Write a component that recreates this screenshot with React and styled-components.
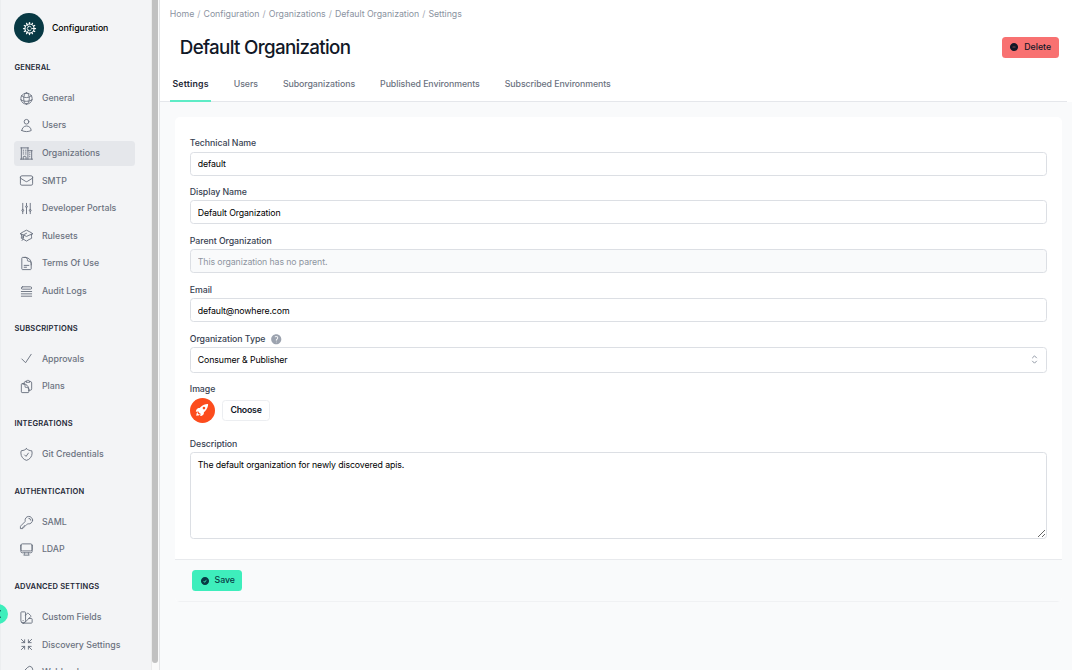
import React from "react";
import styled, { createGlobalStyle, css } from "styled-components";
import {
  HiOutlineGlobeAlt,
  HiOutlineUser,
  HiOutlineBuildingOffice2,
  HiOutlineEnvelope,
  HiOutlineAdjustmentsVertical,
  HiOutlineAcademicCap,
  HiOutlineDocumentText,
  HiOutlineQueueList,
  HiOutlineCheck,
  HiOutlineClipboardDocument,
  HiOutlineShieldCheck,
  HiOutlineKey,
  HiOutlineComputerDesktop,
  HiOutlineSwatch,
  HiOutlineArrowsPointingIn,
  HiOutlineLink,
  HiMinusCircle,
  HiCheckCircle,
  HiQuestionMarkCircle,
  HiOutlineChevronUpDown,
} from "react-icons/hi2";
import { IoRocketSharp } from "react-icons/io5";

const GlobalStyle = createGlobalStyle`
  *, *::before, *::after { box-sizing: border-box; }
  body {
    margin: 0;
    overflow: hidden;
    background: #f9fafb;
    font-family: Inter, "Liberation Sans", sans-serif;
    font-size: 8.78px;
    line-height: 12.5px;
    color: #111827;
  }
  button, input, textarea { font: inherit; color: inherit; letter-spacing: inherit; }
`;

const Shell = styled.div`
  display: flex;
  width: 1072px;
  height: 670px;
  overflow: hidden;
  position: relative;
`;

const Sidebar = styled.aside`
  display: flex;
  flex: none;
  width: 160px;
  height: 670px;
  background: #f3f4f6;
  border-right: 1px solid #e3e4e6;
`;

const SidebarContent = styled.div`
  flex: 1;
  overflow: hidden;
  padding: 13px 0 0 14.4px;
  border-left: 1px solid #eceef0;
`;

const ScrollTrack = styled.div`
  flex: none;
  width: 8px;
  background: #fafafa;
  border-left: 1px solid #ebebeb;
`;

const ScrollThumb = styled.div`
  width: 5.5px;
  height: 663px;
  background: #c1c1c1;
  border-radius: 0 0 3px 3px;
`;

const Brand = styled.div`
  display: flex;
  align-items: center;
  gap: 7.6px;
  margin-left: -1px;
  height: 30px;
  font-weight: 500;
  letter-spacing: -0.08px;
  color: #000;
`;

const BrandMark = styled.span`
  display: flex;
  align-items: center;
  justify-content: center;
  width: 30px;
  height: 30px;
  border-radius: 50%;
  background: #083944;
  color: #fff;
  svg { width: 15px; height: 15px; }
`;

const NavGroup = styled.section`
  margin: ${(p) => (p.$first ? "19.1px" : "19.3px")} 0 0 -1px;
`;

const NavHeading = styled.h2`
  margin: 0 0 11px;
  font-size: 7.53px;
  line-height: 12.5px;
  font-weight: 600;
  letter-spacing: 0.19px;
  color: #1f2937;
  text-transform: uppercase;
`;

const NavItem = styled.div`
  display: flex;
  align-items: center;
  gap: 7.4px;
  width: 120.4px;
  height: 25.1px;
  margin-bottom: 2.48px;
  padding-left: 5.1px;
  border-radius: 3.5px;
  font-weight: 500;
  color: #6b7280;
  background: ${(p) => (p.$active ? "#e5e7eb" : "transparent")};
  &:last-child { margin-bottom: -0.1px; }
  svg { width: 15px; height: 15px; flex: none; }
`;

const EdgeButton = styled.div`
  position: absolute;
  left: -12.5px;
  top: 603.5px;
  width: 20px;
  height: 20px;
  border-radius: 50%;
  background: #3eeebc;
  display: flex;
  align-items: center;
  justify-content: flex-end;
  svg { width: 8px; height: 8px; margin-right: 6.5px; }
`;

const Main = styled.main`
  flex: 1;
  min-width: 0;
  display: flex;
  flex-direction: column;
`;

const Header = styled.header`
  height: 102px;
  background: #fff;
  display: flex;
  flex-direction: column;
`;

const Breadcrumbs = styled.nav`
  display: flex;
  gap: 3.1px;
  padding: 8px 0 0 9.8px;
  letter-spacing: -0.035px;
  color: #8b93a1;
  span { color: #a3a9b4; }
`;

const TitleRow = styled.div`
  display: flex;
  align-items: center;
  justify-content: space-between;
  height: 26px;
  margin: 13.5px 13.3px 0 19.8px;
`;

const Title = styled.h1`
  margin: 1px 0 0;
  font-size: 18.8px;
  line-height: 26px;
  font-weight: 500;
  letter-spacing: -0.69px;
  color: #111827;
`;

const Button = styled.button`
  display: flex;
  align-items: center;
  padding: 0 7.6px;
  gap: 5px;
  height: 21px;
  border: 0;
  border-radius: 3.5px;
  font-weight: 500;
  white-space: nowrap;
  svg { width: 10px; height: 10px; }
  ${(p) =>
    p.$tone === "danger" &&
    css`background: #f87171; color: #111827;`}
  ${(p) =>
    p.$tone === "primary" &&
    css`background: #3eeebc; color: #083944; letter-spacing: -0.1px; padding: 0 7.2px;`}
  ${(p) =>
    p.$tone === "plain" &&
    css`background: #fff; color: #111827; border: 1px solid #eceef1; font-weight: 600; letter-spacing: -0.23px; padding: 0 7.2px;`}
`;

const Tabs = styled.div`
  display: flex;
  align-items: stretch;
  gap: 20px;
  flex: 1;
  margin: 7.4px 5px 0 0;
  padding-left: 9.9px;
  border-bottom: 1px solid #e5e7eb;
`;

const Tab = styled.div`
  padding: 10.9px 2.5px 0;
  margin-bottom: -1px;
  letter-spacing: ${(p) => (p.$active ? "0.2px" : "-0.06px")};
  font-weight: ${(p) => (p.$active ? 600 : 500)};
  color: ${(p) => (p.$active ? "#1f2937" : "#6b7280")};
  border-bottom: ${(p) => (p.$active ? "2px solid #5eecc6" : "0")};
`;

const Card = styled.section`
  margin: 15px 10.5px 0 15px;
  border-radius: 5px;
  background: #fff;
  overflow: hidden;
  letter-spacing: -0.11px;
`;

const Form = styled.div`
  padding: 20.2px 14.9px 0 14.8px;
  height: 442px;
`;

const Field = styled.div`
  display: flex;
  flex-direction: column;
  margin-bottom: ${(p) => p.$gap || "10.5px"};
`;

const Label = styled.label`
  display: flex;
  align-items: center;
  gap: 5px;
  height: 12.5px;
  margin-bottom: 1.9px;
  font-weight: 500;
  letter-spacing: -0.06px;
  color: #374151;
  svg { width: 12.5px; height: 12.5px; color: #9ca3af; }
`;

const Input = styled.input`
  height: 24px;
  width: 100%;
  padding: 0 7px;
  border: 1px solid #dcdfe4;
  border-radius: 3.5px;
  background: #fff;
  color: #000;
  outline: 0;
  &::placeholder { color: #8e95a1; opacity: 1; }
  &:disabled { background: #f9fafb; }
`;

const Select = styled.div`
  display: flex;
  align-items: center;
  justify-content: space-between;
  height: 25.5px;
  padding: 0 5px 0 7px;
  border: 1px solid #dcdfe4;
  border-radius: 3.5px;
  color: #000;
  svg { width: 13px; height: 13px; color: #8f96a3; stroke-width: 1.8; }
`;

const ImageRow = styled.div`
  display: flex;
  align-items: center;
  gap: 7.5px;
  height: 25px;
`;

const Avatar = styled.span`
  display: flex;
  align-items: center;
  justify-content: center;
  width: 25px;
  height: 25px;
  border-radius: 50%;
  background: #fc4c1d;
  color: #fff;
  svg { width: 14px; height: 14px; }
`;

const TextArea = styled.textarea`
  display: block;
  width: 100%;
  height: 87px;
  padding: 5.4px 7px;
  border: 1px solid #dcdfe4;
  border-radius: 3.5px;
  color: #000;
  outline: 0;
`;

const Footer = styled.footer`
  display: flex;
  align-items: center;
  height: 43px;
  padding-left: 17.4px;
  background: #f9fafb;
  border-top: 1px solid #e8eaed;
  border-bottom: 1px solid #f0f1f3;
`;

const TEETH = Array.from({ length: 12 }, (_, i) => i * 30);

function GearIcon() {
  return (
    <svg viewBox="0 0 24 24" fill="none" stroke="currentColor" strokeLinecap="round">
      <circle cx="12" cy="12" r="7.3" strokeWidth="1.8" />
      {TEETH.map((angle) => (
        <path key={angle} d="M12 4.2V2.4" strokeWidth="2" transform={`rotate(${angle} 12 12)`} />
      ))}
      <path d="M14.6 9.6a3.5 3.5 0 1 0 0 4.8M15.4 12H19M10.2 9l-1.8-3.1M10.2 15l-1.8 3.1" strokeWidth="1.4" />
    </svg>
  );
}

const GROUPS = [
  {
    title: "General",
    items: [
      ["General", HiOutlineGlobeAlt],
      ["Users", HiOutlineUser],
      ["Organizations", HiOutlineBuildingOffice2],
      ["SMTP", HiOutlineEnvelope],
      ["Developer Portals", HiOutlineAdjustmentsVertical],
      ["Rulesets", HiOutlineAcademicCap],
      ["Terms Of Use", HiOutlineDocumentText],
      ["Audit Logs", HiOutlineQueueList],
    ],
  },
  {
    title: "Subscriptions",
    items: [
      ["Approvals", HiOutlineCheck],
      ["Plans", HiOutlineClipboardDocument],
    ],
  },
  { title: "Integrations", items: [["Git Credentials", HiOutlineShieldCheck]] },
  {
    title: "Authentication",
    items: [
      ["SAML", HiOutlineKey],
      ["LDAP", HiOutlineComputerDesktop],
    ],
  },
  {
    title: "Advanced Settings",
    items: [
      ["Custom Fields", HiOutlineSwatch],
      ["Discovery Settings", HiOutlineArrowsPointingIn],
      ["Webhooks", HiOutlineLink],
    ],
  },
];

const CRUMBS = ["Home", "Configuration", "Organizations", "Default Organization", "Settings"];
const TABS = ["Settings", "Users", "Suborganizations", "Published Environments", "Subscribed Environments"];

export default function App() {
  return (
    <Shell>
      <GlobalStyle />
      <Sidebar>
        <SidebarContent>
          <Brand>
            <BrandMark><GearIcon /></BrandMark>
            Configuration
          </Brand>
          {GROUPS.map((group, i) => (
            <NavGroup key={group.title} $first={i === 0}>
              <NavHeading>{group.title}</NavHeading>
              {group.items.map(([name, Icon]) => (
                <NavItem key={name} $active={name === "Organizations"}>
                  <Icon />
                  {name}
                </NavItem>
              ))}
            </NavGroup>
          ))}
        </SidebarContent>
        <ScrollTrack><ScrollThumb /></ScrollTrack>
      </Sidebar>
      <Main>
        <Header>
          <Breadcrumbs>
            {CRUMBS.map((crumb, i) => (
              <React.Fragment key={crumb}>
                {i > 0 && <span>/</span>}
                <div>{crumb}</div>
              </React.Fragment>
            ))}
          </Breadcrumbs>
          <TitleRow>
            <Title>Default Organization</Title>
            <Button $tone="danger"><HiMinusCircle />Delete</Button>
          </TitleRow>
          <Tabs>
            {TABS.map((tab, i) => (
              <Tab key={tab} $active={i === 0}>{tab}</Tab>
            ))}
          </Tabs>
        </Header>
        <Card>
          <Form>
            <Field>
              <Label>Technical Name</Label>
              <Input defaultValue="default" />
            </Field>
            <Field>
              <Label>Display Name</Label>
              <Input defaultValue="Default Organization" />
            </Field>
            <Field>
              <Label>Parent Organization</Label>
              <Input disabled placeholder="This organization has no parent." />
            </Field>
            <Field>
              <Label>Email</Label>
              <Input defaultValue="default@nowhere.com" />
            </Field>
            <Field>
              <Label>Organization Type<HiQuestionMarkCircle /></Label>
              <Select>Consumer &amp; Publisher<HiOutlineChevronUpDown /></Select>
            </Field>
            <Field $gap="15.4px">
              <Label>Image</Label>
              <ImageRow>
                <Avatar><IoRocketSharp /></Avatar>
                <Button $tone="plain">Choose</Button>
              </ImageRow>
            </Field>
            <Field $gap="0">
              <Label>Description</Label>
              <TextArea defaultValue="The default organization for newly discovered apis." />
            </Field>
          </Form>
          <Footer>
            <Button $tone="primary"><HiCheckCircle />Save</Button>
          </Footer>
        </Card>
      </Main>
      <EdgeButton>
        <svg viewBox="0 0 8 8" fill="none" stroke="#083944" strokeWidth="1">
          <path d="M4 0.8h4M4 7.2h4" />
        </svg>
      </EdgeButton>
    </Shell>
  );
}
